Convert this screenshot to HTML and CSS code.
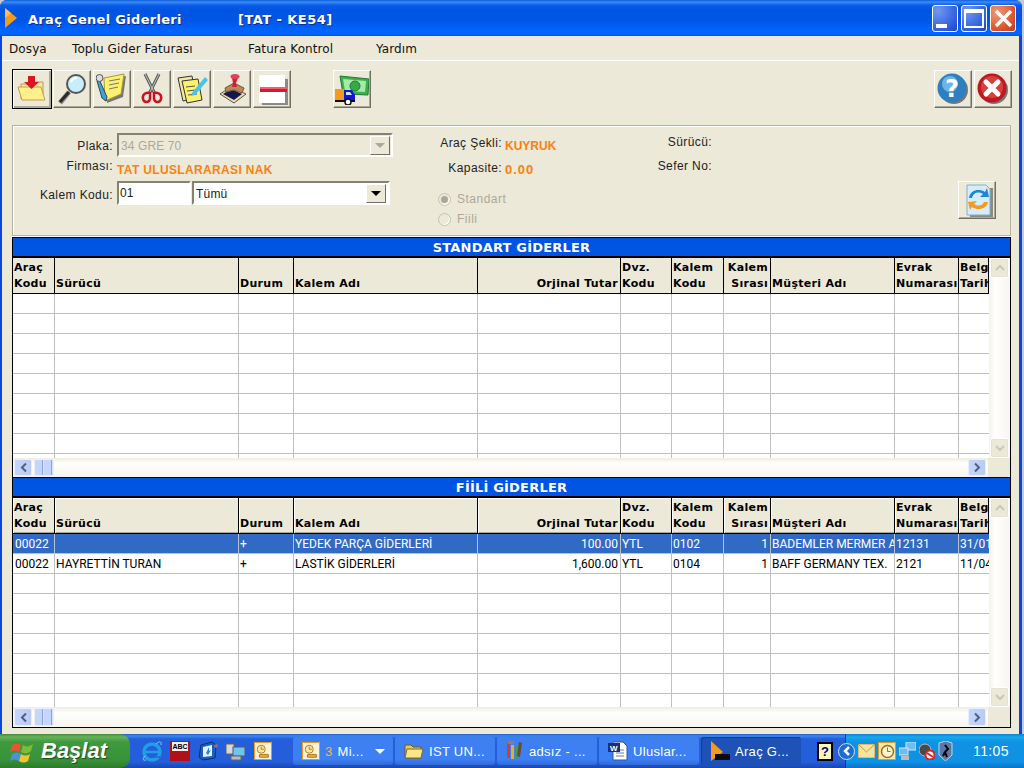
FILE: index.html
```html
<!DOCTYPE html>
<html lang="tr">
<head>
<meta charset="utf-8">
<title>Araç Genel Giderleri</title>
<link rel="stylesheet" href="styles.css">
</head>
<body>
<div class="window">
  <header class="titlebar">
    <svg class="app-icon" width="14" height="22" viewBox="0 0 14 22"><path d="M1 1 13 11 1 21Z" fill="#f59a1c"/><path d="M1 1 7 6 1 11Z" fill="#ffc04d"/></svg>
    <span class="title-main">Araç Genel Giderleri</span>
    <span class="title-sub">[TAT - KE54]</span>
    <span class="spacer"></span>
    <span class="cap cap-blue"><i class="min-glyph"></i></span>
    <span class="cap cap-blue"><i class="max-glyph"></i></span>
    <span class="cap cap-red">
      <svg width="21" height="21" viewBox="0 0 21 21"><path d="M3 3 18 18M18 3 3 18" stroke="#fff" stroke-width="3.500"/></svg>
    </span>
  </header>
  <div class="client">
    <nav class="menubar">
      <span>Dosya</span>
      <span>Toplu Gider Faturası</span>
      <span>Fatura Kontrol</span>
      <span>Yardım</span>
    </nav>
    <div class="toolbar">
      <button class="tbtn focus"><svg width="32" height="32" viewBox="0 0 32 32"><path d="M5 11h9l2-2h11v17H5Z" fill="#f6e9a8" stroke="#b89a50"/><path d="M2 14h23l4 13H6Z" fill="#fff08a" stroke="#c79c4e"/><path d="M12 3h7v6h4l-7.500 7L8 9h4Z" fill="#e0141c"/></svg></button>
      <button class="tbtn"><svg width="32" height="32" viewBox="0 0 32 32"><path d="M13 19 4 30" stroke="#8a8a8a" stroke-width="5"/><path d="M13 19 4 29" stroke="#2a2a2a" stroke-width="3"/><circle cx="20" cy="11" r="9" fill="#c8eefa" stroke="#555" stroke-width="2"/><path d="M15 9a6 6 0 0 1 6-4" stroke="#fff" stroke-width="2" fill="none"/></svg></button>
      <button class="tbtn"><svg width="32" height="32" viewBox="0 0 32 32"><path d="M10 6 30 3 27 24 11 30Z" fill="#777"/><path d="M8 5 28 1 25 21 9 28Z" fill="#fdf06a" stroke="#a89a3a"/><path d="M13 8l11-2M13 12l10-2M13 16l9-2" stroke="#777"/><path d="M3 6 11 24 10 28 6 25 1 8Z" fill="#3ba3d8" stroke="#345"/><circle cx="3.500" cy="5" r="3.500" fill="#ddd" stroke="#555"/></svg></button>
      <button class="tbtn"><svg width="32" height="32" viewBox="0 0 32 32"><path d="M9 1 19 21M23 1 13 21" stroke="#555" stroke-width="3"/><path d="M9 1 19 21M23 1 13 21" stroke="#ccc"/><path d="M14 20C9 19 6 22 7 26s6 4 7 0ZM18 20c5-1 8 2 7 6s-6 4-7 0Z" fill="none" stroke="#d01020" stroke-width="2.500"/></svg></button>
      <button class="tbtn"><svg width="32" height="32" viewBox="0 0 32 32"><path d="M2 5 16 3 20 25 7 28Z" fill="#f3e8a0" stroke="#333"/><path d="M6 8 22 6 26 27 11 30Z" fill="#fdf06a" stroke="#333"/><path d="M10 14l9-1M11 18l9-1M12 22l9-1" stroke="#555"/><path d="M16 20 29 4 32 7 19 22 15 23Z" fill="#45c4ee"/></svg></button>
      <button class="tbtn"><svg width="32" height="32" viewBox="0 0 32 32"><path d="M4 21 15 14 30 21 18 30Z" fill="#f2dca8" stroke="#555"/><path d="M7 21 15 16 26 21 18 27Z" fill="#101a50"/><path d="M9 15 18 10 28 15 26 20 18 17 10 19Z" fill="#b98a58" stroke="#7a5530"/><path d="M16 5h6l-2 5 1 4h-5l1-4Z" fill="#d02038"/><ellipse cx="19" cy="3.500" rx="4.500" ry="2.500" fill="#e04058"/></svg></button>
      <button class="tbtn"><svg width="32" height="32" viewBox="0 0 32 32"><path d="M6 6h26v28H6Z" fill="#8a8a86"/><path d="M3 2h26v28H3Z" fill="#fff"/><path d="M4 14h27v5H4Z" fill="#d81830"/><path d="M4 14h27v2H4Z" fill="#f06070"/></svg></button>
      <button class="tbtn gap-btn"><svg width="34" height="32" viewBox="0 0 34 32"><path d="M5 3 34 6 33 22 8 21Z" fill="#38b24a" stroke="#207a30"/><path d="M8 6 31 8 30 19 10 18Z" fill="#a8e8a8"/><circle cx="20" cy="13" r="5" fill="#38a848" stroke="#1e7a30"/><path d="M0 16h9v11H0Z" fill="#f59a1c"/><path d="M9 17h8l3 5v6H9Z" fill="#1018d8"/><path d="M11 19h4l2 3h-6Z" fill="#d0e8ff"/><path d="M0 27h20v2H0Z" fill="#101010"/><circle cx="13" cy="29" r="3" fill="#fff" stroke="#111" stroke-width="1.500"/></svg></button>
      <span class="spacer"></span>
      <button class="tbtn"><svg width="32" height="32" viewBox="0 0 32 32"><circle cx="17" cy="17" r="14" fill="#777"/><circle cx="15" cy="15" r="14.500" fill="#2e7fc0"/><circle cx="13" cy="11" r="8" fill="#6db4e4"/><text class="help-mark" x="15" y="24" text-anchor="middle">?</text></svg></button>
      <button class="tbtn"><svg width="32" height="32" viewBox="0 0 32 32"><circle cx="17" cy="17" r="14" fill="#777"/><circle cx="15" cy="15" r="14.500" fill="#c01820"/><circle cx="15" cy="14" r="11" fill="#d84040"/><path d="M9 9 21 21M21 9 9 21" stroke="#fff" stroke-width="5" stroke-linecap="round"/></svg></button>
    </div>

    <section class="panel">
      <div class="pcol pcol-a">
        <div class="frow frow-plaka">
          <label class="flabel">Plaka:</label>
          <div class="select select-off"><span class="sel-text">34 GRE 70</span><span class="sel-btn sel-btn-off"><i class="arrow arrow-off"></i></span></div>
        </div>
        <div class="frow frow-firma">
          <label class="flabel">Firması:</label>
          <span class="orange">TAT ULUSLARARASI NAK</span>
        </div>
        <div class="frow frow-kalem">
          <label class="flabel">Kalem Kodu:</label>
          <div class="input">01</div>
          <div class="select select-on"><span class="sel-text">Tümü</span><span class="sel-btn"><i class="arrow"></i></span></div>
        </div>
      </div>
      <div class="pcol pcol-b">
        <div class="irow irow-1"><label class="ilabel">Araç Şekli:</label><span class="orange">KUYRUK</span></div>
        <div class="irow irow-2"><label class="ilabel">Kapasite:</label><span class="orange orange-num">0.00</span></div>
        <div class="radio-row radio-first"><i class="radio checked"></i><span>Standart</span></div>
        <div class="radio-row"><i class="radio"></i><span>Fiili</span></div>
      </div>
      <div class="pcol pcol-c">
        <label class="clabel">Sürücü:</label>
        <label class="clabel">Sefer No:</label>
      </div>
      <button class="tbtn refresh"><svg width="32" height="34" viewBox="0 0 32 34"><path d="M9 5h23v29H9Z" fill="#8a8a80"/><path d="M6 2h19l4 4v26H6Z" fill="#d6ecfa" stroke="#7fb0d0"/><path d="M8 15C9 7 18 5 24 9l2-4 2 9-9 0 3-3C17 8 12 10 11 15Z" fill="#1f86d6"/><path d="M27 19c-1 7-10 9-16 5l-2 3-2-8 9-1-3 3c5 3 9 1 10-2Z" fill="#f59a1c"/></svg></button>
    </section>

    <section class="grid grid-std">
      <h2 class="grid-title">STANDART GİDERLER</h2>
      <div class="grid-main">
        <div class="grid-table">
          <div class="row head">
            <span>Araç<br>Kodu</span><span>Sürücü</span><span>Durum</span><span>Kalem Adı</span><span class="num">Orjinal Tutar</span><span>Dvz.<br>Kodu</span><span>Kalem<br>Kodu</span><span class="num">Kalem<br>Sırası</span><span>Müşteri Adı</span><span>Evrak<br>Numarası</span><span>Belge<br>Tarihi</span>
          </div>
          <div class="rows">
            <div class="row"><span></span><span></span><span></span><span></span><span></span><span></span><span></span><span></span><span></span><span></span><span></span></div>
            <div class="row"><span></span><span></span><span></span><span></span><span></span><span></span><span></span><span></span><span></span><span></span><span></span></div>
            <div class="row"><span></span><span></span><span></span><span></span><span></span><span></span><span></span><span></span><span></span><span></span><span></span></div>
            <div class="row"><span></span><span></span><span></span><span></span><span></span><span></span><span></span><span></span><span></span><span></span><span></span></div>
            <div class="row"><span></span><span></span><span></span><span></span><span></span><span></span><span></span><span></span><span></span><span></span><span></span></div>
            <div class="row"><span></span><span></span><span></span><span></span><span></span><span></span><span></span><span></span><span></span><span></span><span></span></div>
            <div class="row"><span></span><span></span><span></span><span></span><span></span><span></span><span></span><span></span><span></span><span></span><span></span></div>
            <div class="row"><span></span><span></span><span></span><span></span><span></span><span></span><span></span><span></span><span></span><span></span><span></span></div>
            <div class="row"><span></span><span></span><span></span><span></span><span></span><span></span><span></span><span></span><span></span><span></span><span></span></div>
          </div>
        </div>
        <div class="vscroll"><i class="vbtn"><svg width="12" height="8" viewBox="0 0 12 8"><path d="M2 6 6 2 10 6" fill="none" stroke="#c9c7ba" stroke-width="2"/></svg></i><i class="vbtn"><svg width="12" height="8" viewBox="0 0 12 8"><path d="M2 2 6 6 10 2" fill="none" stroke="#c9c7ba" stroke-width="2"/></svg></i></div>
      </div>
      <div class="hscroll">
        <i class="hbtn"><svg width="9" height="11" viewBox="0 0 9 11"><path d="M7 1.500 3 5.500 7 9.500" fill="none" stroke="#4d6185" stroke-width="2"/></svg></i>
        <i class="hthumb"></i><span class="spacer"></span>
        <i class="hbtn"><svg width="9" height="11" viewBox="0 0 9 11"><path d="M2 1.500 6 5.500 2 9.500" fill="none" stroke="#4d6185" stroke-width="2"/></svg></i>
        <span class="hcorner"></span>
      </div>
    </section>

    <section class="grid grid-act">
      <h2 class="grid-title">FİİLİ GİDERLER</h2>
      <div class="grid-main">
        <div class="grid-table">
          <div class="row head head-raised">
            <span>Araç<br>Kodu</span><span>Sürücü</span><span>Durum</span><span>Kalem Adı</span><span class="num">Orjinal Tutar</span><span>Dvz.<br>Kodu</span><span>Kalem<br>Kodu</span><span class="num">Kalem<br>Sırası</span><span>Müşteri Adı</span><span>Evrak<br>Numarası</span><span>Belge<br>Tarihi</span>
          </div>
          <div class="rows">
            <div class="row selected"><span>00022</span><span></span><span>+</span><span>YEDEK PARÇA GİDERLERİ</span><span class="num">100.00</span><span>YTL</span><span>0102</span><span class="num">1</span><span>BADEMLER MERMER A.Ş.</span><span>12131</span><span>31/01/2006</span></div>
            <div class="row"><span>00022</span><span>HAYRETTİN TURAN</span><span>+</span><span>LASTİK GİDERLERİ</span><span class="num">1,600.00</span><span>YTL</span><span>0104</span><span class="num">1</span><span>BAFF GERMANY TEX.</span><span>2121</span><span>11/04/2006</span></div>
            <div class="row"><span></span><span></span><span></span><span></span><span></span><span></span><span></span><span></span><span></span><span></span><span></span></div>
            <div class="row"><span></span><span></span><span></span><span></span><span></span><span></span><span></span><span></span><span></span><span></span><span></span></div>
            <div class="row"><span></span><span></span><span></span><span></span><span></span><span></span><span></span><span></span><span></span><span></span><span></span></div>
            <div class="row"><span></span><span></span><span></span><span></span><span></span><span></span><span></span><span></span><span></span><span></span><span></span></div>
            <div class="row"><span></span><span></span><span></span><span></span><span></span><span></span><span></span><span></span><span></span><span></span><span></span></div>
            <div class="row"><span></span><span></span><span></span><span></span><span></span><span></span><span></span><span></span><span></span><span></span><span></span></div>
            <div class="row"><span></span><span></span><span></span><span></span><span></span><span></span><span></span><span></span><span></span><span></span><span></span></div>
          </div>
        </div>
        <div class="vscroll"><i class="vbtn"><svg width="12" height="8" viewBox="0 0 12 8"><path d="M2 6 6 2 10 6" fill="none" stroke="#c9c7ba" stroke-width="2"/></svg></i><i class="vbtn"><svg width="12" height="8" viewBox="0 0 12 8"><path d="M2 2 6 6 10 2" fill="none" stroke="#c9c7ba" stroke-width="2"/></svg></i></div>
      </div>
      <div class="hscroll">
        <i class="hbtn"><svg width="9" height="11" viewBox="0 0 9 11"><path d="M7 1.500 3 5.500 7 9.500" fill="none" stroke="#4d6185" stroke-width="2"/></svg></i>
        <i class="hthumb"></i><span class="spacer"></span>
        <i class="hbtn"><svg width="9" height="11" viewBox="0 0 9 11"><path d="M2 1.500 6 5.500 2 9.500" fill="none" stroke="#4d6185" stroke-width="2"/></svg></i>
        <span class="hcorner"></span>
      </div>
    </section>
  </div>
</div>

<footer class="taskbar">
  <div class="start">
    <svg width="26" height="24" viewBox="0 0 26 24"><path d="M2 6C5 4 8 4 11 6L9 13C6 11 3 11 0 13Z" fill="#e8562a"/><path d="M13 6C16 8 19 8 23 5L21 12C18 15 14 15 11 13Z" fill="#7fba3a"/><path d="M0 15C3 13 6 13 9 15L7 22C4 20 1 20-2 22Z" fill="#4a8fe0" transform="translate(2 0)"/><path d="M11 15C14 17 17 17 20 15L18 22C15 24 12 24 9 22Z" fill="#f4c430"/></svg>
    <span>Başlat</span>
  </div>
  <div class="quick">
    <svg width="20" height="22" viewBox="0 0 20 22"><ellipse cx="10" cy="12" rx="8" ry="8" fill="none" stroke="#1f9fe8" stroke-width="3.500"/><path d="M3 12h14" stroke="#1f9fe8" stroke-width="2.500"/><path d="M13 17h6" stroke="#2a6fd0" stroke-width="2"/><path d="M4 20C1 21 0 19 3 16M14 4c3-3 6-3 5 1" stroke="#7fd0f8" fill="none"/></svg>
    <span class="abc"><b>ABC</b></span>
    <svg width="20" height="20" viewBox="0 0 20 20"><path d="M3 4 14 1 18 4 17 17 5 19 1 16Z" fill="#175fc0" stroke="#0a2f70"/><path d="M5 6 14 4 14 15 5 16Z" fill="#e8f2fc"/><path d="M8 12l3-6v4l2-1-3 5Z" fill="#1f86d6"/><path d="M16 5h4M18 3v4" stroke="#f07030"/></svg>
    <svg width="20" height="20" viewBox="0 0 20 20"><rect x="0" y="3" width="8" height="10" fill="#d8d8d8" stroke="#666"/><rect x="7" y="6" width="12" height="9" fill="#6fc5f0" stroke="#557"/><path d="M5 15h10v4H5Z" fill="#bbb" stroke="#666"/></svg>
    <span class="clock-icon"><svg width="18" height="18" viewBox="0 0 18 18"><circle cx="7" cy="7" r="4.500" fill="#f8e8a8" stroke="#b07010"/><path d="M7 4v3h3" stroke="#b07010" fill="none"/><path d="M5 13h10v3H5Z" fill="#e8b040" stroke="#b07010"/></svg></span>
  </div>
  <div class="tasks">
    <div class="task"><span class="clock-icon"><svg width="16" height="16" viewBox="0 0 18 18"><circle cx="7" cy="7" r="4.500" fill="#f8e8a8" stroke="#b07010"/><path d="M7 4v3h3" stroke="#b07010" fill="none"/><path d="M5 13h10v3H5Z" fill="#e8b040" stroke="#b07010"/></svg></span><em>3</em><span class="task-text">Mi...</span><i class="task-arrow"></i></div>
    <div class="task"><svg width="20" height="18" viewBox="0 0 20 18"><path d="M1 3h6l2 2h8v11H1Z" fill="#e8c860" stroke="#705a20"/><path d="M3 7h16l-2 9H1Z" fill="#fbe58a" stroke="#806a20"/></svg><span class="task-text">IST UN...</span></div>
    <div class="task"><svg width="18" height="20" viewBox="0 0 18 20"><path d="M1 2h3v15H1Z" fill="#d04030"/><path d="M5 4h3v14H5Z" fill="#e8b020"/><path d="M9 4h3v14H9Z" fill="#40a040"/><path d="M13 1l3 1-2 14-3-1Z" fill="#6b4a30"/><path d="M2 0h6v3H2Z" fill="#c0703a"/></svg><span class="task-text">adsız - ...</span></div>
    <div class="task"><svg width="20" height="20" viewBox="0 0 20 20"><path d="M5 1h10l4 4v14H5Z" fill="#fff" stroke="#34559b"/><path d="M8 9h8M8 12h8M8 15h8" stroke="#5c7fc0"/><path d="M0 2h12v9H0Z" fill="#1d2f7a"/><text class="word-mark" x="6" y="10" text-anchor="middle">W</text></svg><span class="task-text">Uluslar...</span></div>
    <div class="task active"><svg width="20" height="20" viewBox="0 0 20 20"><path d="M1 0 13 11 1 20Z" fill="#f59a1c"/><path d="M5 13h15v6H5Z" fill="#0c0c0c"/></svg><span class="task-text">Araç G...</span></div>
  </div>
  <span class="help-tray"><b>?</b></span>
  <div class="tray">
    <span class="tray-chevron"><svg width="12" height="12" viewBox="0 0 12 12"><path d="M8 2 4 6 8 10" fill="none" stroke="#fff" stroke-width="2.500"/></svg></span>
    <svg width="17" height="14" viewBox="0 0 17 14"><path d="M0 0h17v14H0Z" fill="#f8e2a0" stroke="#b89a50"/><path d="M0 0 8.500 8 17 0" fill="none" stroke="#b89a50"/></svg>
    <span class="tray-clock"><svg width="15" height="15" viewBox="0 0 15 15"><circle cx="7.500" cy="7.500" r="6" fill="#fff6d0" stroke="#a86a10" stroke-width="1.500"/><path d="M7.500 3.500v4h3" stroke="#a86a10" fill="none"/></svg></span>
    <svg width="17" height="19" viewBox="0 0 17 19"><rect x="7" y="0" width="10" height="8" fill="#6fbdf0" stroke="#d0e8f8"/><rect x="0" y="6" width="9" height="7" fill="#6fbdf0" stroke="#d0e8f8"/><path d="M2 14h8v4H2Z" fill="#bbb"/></svg>
    <svg width="16" height="17" viewBox="0 0 16 17"><circle cx="6" cy="7" r="6" fill="#4a4a4a" stroke="#bbb"/><circle cx="11" cy="12" r="4.500" fill="#fff" stroke="#e02020" stroke-width="2"/><path d="M8 10 14 14" stroke="#e02020" stroke-width="2"/></svg>
    <svg width="15" height="20" viewBox="0 0 15 20"><path d="M1 2 7.500 0 14 2V14L7.500 20 1 14Z" fill="#5a78a8" stroke="#c8d4e4"/><path d="M7 4 10 8 7 11 9 16M7 11 5 15" stroke="#000" stroke-width="2" fill="none"/></svg>
    <time class="clock">11:05</time>
  </div>
</footer>
</body>
</html>
```
FILE: styles.css
```css
* { box-sizing: border-box; }
html, body { margin: 0; padding: 0; }
body {
  width: 1024px; height: 768px; overflow: hidden;
  display: flex; flex-direction: column;
  background: #c8c8d0;
  font-family: "Liberation Sans", Arial, sans-serif;
  font-size: 12px; color: #000;
}
.spacer { flex: 1; }

/* window */
.window {
  width: 1022px; height: 734px; flex: none;
  display: flex; flex-direction: column;
  background: #0a46d8;
  border-radius: 7px 7px 0 0;
  padding: 0 3px 0 2px;
}
.titlebar {
  height: 36px; flex: none; margin: 0 -3px 0 -2px;
  display: flex; align-items: center;
  padding: 0 6px 0 4px;
  border-radius: 7px 7px 0 0;
  background: linear-gradient(#0a5fe0 0, #3f8cf3 2px, #0a5fe8 5px, #0054e3 10px, #0055e5 20px, #0064ff 30px, #0066ff 34px, #0050d8 36px);
  color: #fff;
  font-family: "DejaVu Sans", Verdana, sans-serif;
  font-weight: bold; font-size: 13px; letter-spacing: 0.3px;
  text-shadow: 1px 1px 0 #0f2c8a;
}
.app-icon { margin-right: 10px; }
.title-main { width: 210px; margin-top: 3px; }
.title-sub { margin-top: 3px; letter-spacing: 0.45px; }
.cap {
  width: 26px; height: 27px; margin-left: 3px;
  border: 1px solid #fff; border-radius: 3px;
  display: flex; align-items: center; justify-content: center;
}
.cap-blue { background: radial-gradient(circle at 20% 20%, #7198f0, #2f5fdc 70%, #1c44c0); }
.cap-red { background: radial-gradient(circle at 25% 25%, #ec9a7c, #e05a30 60%, #c03a14); }
.min-glyph { width: 11px; height: 4px; background: #fff; margin: 16px 8px 0 0; }
.max-glyph { width: 20px; height: 19px; border: 2px solid #fff; border-top-width: 4px; }

.client { flex: 1; background: #ece9d8; display: flex; flex-direction: column; min-height: 0; }

/* menu */
.menubar {
  height: 25px; flex: none; display: grid; align-items: center;
  grid-template-columns: 63px 176px 128px auto;
  padding: 1px 0 0 7px;
  border-bottom: 1px solid #fff;
  color: #111; font-family: "DejaVu Sans", Verdana, sans-serif; letter-spacing: 0.1px;
}

/* toolbar */
.toolbar {
  height: 64px; flex: none; display: flex; align-items: flex-start; gap: 2px;
  padding: 9px 7px 0 10px;
}
.tbtn {
  width: 38px; height: 38px; padding: 0; margin: 0; flex: none;
  display: flex; align-items: center; justify-content: center;
  background: #ece9d8;
  border: 1px solid; border-color: #fff #716f64 #716f64 #fff;
  box-shadow: inset -1px -1px 0 #aca899;
}
.tbtn.focus { width: 40px; height: 40px; margin: -1px -1px 0 0; border: 1px solid #000; box-shadow: inset 1px 1px 0 #fff, inset -2px -2px 0 #aca899; }
.gap-btn { margin-left: 40px; }
.help-mark { font: bold 24px "DejaVu Sans", sans-serif; fill: #fff; }
.word-mark { font: bold 8px "Liberation Sans", sans-serif; fill: #fff; }

/* panel */
.panel {
  height: 111px; flex: none; margin: 0 8px 0 10px;
  border: 1px solid #b5b29f; box-shadow: inset 1px 1px 0 #fff, 0 1px 0 #fff;
  display: flex; position: relative; color: #222;
}
.pcol { display: flex; flex-direction: column; }
.pcol-a { width: 425px; padding-top: 7px; }
.frow { display: flex; }
.flabel { width: 100px; text-align: right; margin-right: 4px; flex: none; line-height: 24px; padding-top: 1px; letter-spacing: 0.4px; }
.frow-firma { height: 23px; }
.frow-firma .flabel { padding-top: 0; margin-top: -4px; height: 24px; }
.frow-kalem { height: 24px; }
.frow-kalem .flabel { padding-top: 2px; }
.orange { color: #ff7f0f; font-weight: bold; font-size: 12px; line-height: 24px; white-space: nowrap; letter-spacing: 0.35px; }
.select { height: 24px; display: flex; align-items: center; justify-content: space-between; padding: 2px; }
.sel-text { padding-top: 1px; }
.select-off { width: 276px; border: 2px solid; border-color: #85836f #fff #fff #85836f; color: #aca899; letter-spacing: 0.1px; }
.select-on { width: 198px; margin-left: 1px; border: 2px solid; border-color: #85836f #fff #fff #85836f; background: #fff; letter-spacing: 0.2px; }
.sel-btn {
  width: 20px; height: 19px; background: #ece9d8;
  border: 1px solid; border-color: #fff #716f64 #716f64 #fff;
  display: flex; align-items: center; justify-content: center;
}
.sel-btn-off { margin-right: -1px; }
.arrow { width: 0; height: 0; border: 5px solid transparent; border-top: 5px solid #000; border-bottom: 0; }
.arrow-off { border-top-color: #aca899; }
.input {
  width: 74px; height: 24px; background: #fff; padding-left: 1px; line-height: 21px;
  border: 2px solid; border-color: #85836f #fff #fff #85836f;
}

.pcol-b { width: 218px; padding-top: 9px; }
.irow { display: flex; height: 23px; }
.ilabel { width: 64px; text-align: right; margin-right: 3px; flex: none; line-height: 16px; letter-spacing: 0.4px; }
.irow-2 .ilabel { margin-top: 2px; }
.irow-1 .orange { margin-top: -1px; letter-spacing: 0; }
.orange-num { margin-top: 0; font-size: 13px; letter-spacing: 1px; }
.radio-row { height: 20px; display: flex; align-items: center; color: #aca899; letter-spacing: 0.5px; }
.radio-first { margin-top: 8px; }
.radio { width: 13px; height: 13px; border-radius: 50%; border: 1px solid #c4c2b0; box-shadow: inset -1px -1px 0 #fff; margin-right: 6px; display: flex; align-items: center; justify-content: center; }
.checked::after { content: ""; width: 7px; height: 7px; border-radius: 50%; background: #aca899; }
.pcol-c { width: 56px; padding-top: 8px; text-align: right; }
.clabel { height: 23px; line-height: 16px; letter-spacing: 0.4px; }
.clabel + .clabel { padding-top: 1px; }
.refresh { position: absolute; left: 945px; top: 55px; }

/* grids */
.grid { border: 1px solid #000; margin: 0 8px 0 10px; flex: none; display: flex; flex-direction: column; background: #fff; }
.grid-std { height: 241px; margin-top: 1px; }
.grid-act { height: 251px; margin-top: -1px; }
.grid-title {
  height: 18px; margin: 0; padding-top: 1px; flex: none; background: #0054e3; color: #fff;
  text-align: center; font: bold 13px/18px "DejaVu Sans", Verdana, sans-serif; letter-spacing: 0.2px;
}
.grid-main { flex: 1; display: flex; min-height: 0; border-top: 2px solid #000; }
.grid-table { flex: 1; min-width: 0; display: flex; flex-direction: column; }
.row {
  display: grid;
  grid-template-columns: 42px 184px 55px 184px 143px 51px 52px 47px 124px 64px 30px;
  height: 20px; flex: none; border-bottom: 1px solid #c0c0c0;
  font-family: Roboto, "Liberation Sans", sans-serif;
  font-size: 12px; line-height: 20px;
}
.row > span { border-right: 1px solid #c0c0c0; padding-left: 1px; white-space: nowrap; overflow: hidden; }
.row > span:first-child { padding-left: 2px; }
.row > span:last-child { border-right: 0; }
.row > .num { text-align: right; padding-right: 2px; padding-left: 0; }
.rows { flex: 1; min-height: 0; overflow: hidden; }
.selected { background: #316ac5; color: #fff; }
.head {
  height: 36px; background: #ece9d8; border-bottom: 1px solid #000;
  font: bold 11px/16px "DejaVu Sans", Verdana, sans-serif; letter-spacing: 0.3px;
}
.row.head > span { border-right: 1px solid #000; white-space: normal; padding: 18px 0 2px 1px; height: 100%; }
.row.head > span:first-child, .row.head > span:nth-child(6), .row.head > span:nth-child(7), .row.head > span:nth-child(8), .row.head > span:nth-child(10), .row.head > span:nth-child(11) { padding-top: 2px; }
.row.head > .num { padding-right: 2px; padding-left: 0; }
.row.head > span:last-child { white-space: nowrap; }
.head-raised > span { box-shadow: inset 1px 1px 0 #fff, inset 0 -1px 0 #aca899; }

.vscroll {
  width: 21px; flex: none; display: flex; flex-direction: column; justify-content: space-between;
  background: linear-gradient(90deg, #f4f2e8, #fff 30%, #f6f5ee 100%);
}
.vbtn { height: 20px; background: #ece9d8; border: 1px solid #fff; border-radius: 2px; display: flex; align-items: center; justify-content: center; margin: 0 1px; box-shadow: 0 0 0 1px #e6e3d2 inset; }
.hscroll { height: 20px; flex: none; display: flex; gap: 2px; padding: 1px 0 1px 1px; align-items: stretch; background: linear-gradient(#efece0, #fff 30%, #f6f5ee); }
.hbtn { width: 18px; background: linear-gradient(90deg, #c6d5fb, #b9cbf5); border: 1px solid #e8eefc; border-radius: 2px; display: flex; align-items: center; justify-content: center; }
.hthumb { width: 20px; background: repeating-linear-gradient(90deg, #c6d5fb 0 7px, #8aa3db 7px 8px, #d8e2fc 8px 9px); border: 1px solid #e8eefc; border-radius: 2px; }
.hcorner { width: 22px; background: #ece9d8; margin: -1px 0; }
.grid-std .hscroll { height: 19px; }

/* taskbar */
.taskbar {
  height: 34px; flex: none; display: flex; align-items: center; color: #fff;
  background: linear-gradient(#1f5ccf 0, #3d86ea 2px, #245edb 5px, #245edb 28px, #1a45b0 34px);
  font-size: 13px;
}
.start {
  width: 130px; height: 34px; flex: none; display: flex; align-items: center; gap: 5px; padding-left: 10px;
  background: linear-gradient(#3e8f3e 0, #6bb05a 3px, #3f9a3f 8px, #389238 26px, #2c7a2c 34px);
  border-radius: 0 10px 10px 0;
  font: italic bold 22px "Liberation Sans", sans-serif; text-shadow: 1px 1px 1px #1a4a1a;
}
.quick { width: 156px; flex: none; display: flex; align-items: center; gap: 8px; padding-left: 12px; }
.abc { width: 20px; height: 20px; background: #b01018; display: block; font: 7px/9px "Liberation Sans", sans-serif; border-bottom: 3px solid #b01018; text-align: center; }
.abc b { display: block; background: #eee; color: #000; margin: 1px 2px; }
.clock-icon { width: 18px; height: 18px; display: flex; align-items: center; justify-content: center; background: #fff3d8; border: 1px solid #e89a20; }
.tasks { display: flex; gap: 2px; width: 517px; flex: none; margin-left: 7px; }
.task { width: 100px; height: 28px; flex: none; display: flex; align-items: center; gap: 5px; padding: 0 8px 0 9px; background: linear-gradient(#3f7ff0, #3c80f4 80%, #3168d8); border-radius: 3px; white-space: nowrap; letter-spacing: 0.3px; }
.task em { font-style: normal; color: #ffb04a; }
.task-arrow { margin-left: auto; width: 0; height: 0; border: 5px solid transparent; border-top: 5px solid #fff; border-bottom: 0; }
.task.active { background: #1e52b7; box-shadow: inset 1px 1px 1px #143e90; }
.help-tray { width: 16px; height: 19px; margin-left: 7px; background: #fff8b0; border: 2px solid #000; color: #000080; text-align: center; flex: none; font: bold 13px/15px "Liberation Sans", sans-serif; }
.tray {
  flex: 1; height: 34px; margin-left: 12px; display: flex; align-items: center; gap: 3px;
  background: linear-gradient(#0c7fd8 0, #18a8ea 3px, #0f92e3 8px, #0f92e3 28px, #0c70c8 34px);
  border-left: 1px solid #0a3d9c;
}
.tray-chevron { width: 17px; height: 17px; border-radius: 50%; background: #1a6cd8; border: 1px solid #cfe3fa; display: flex; align-items: center; justify-content: center; margin-left: -8px; }
.tray-clock { width: 18px; height: 18px; background: #ffe8b0; border: 1px solid #e89a20; display: flex; align-items: center; justify-content: center; }
.clock { margin-left: 17px; font-size: 14px; letter-spacing: 0.4px; }
```
